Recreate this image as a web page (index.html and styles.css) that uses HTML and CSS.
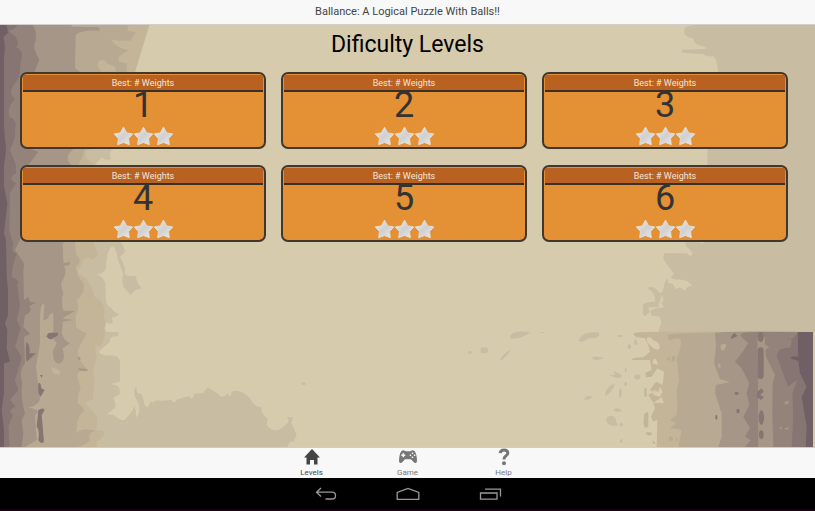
FILE: index.html
```html
<!DOCTYPE html>
<html lang="en">
<head>
<meta charset="utf-8">
<meta name="viewport" content="width=device-width, initial-scale=1">
<title>Ballance: A Logical Puzzle With Balls!!</title>
<link rel="stylesheet" href="styles.css">
</head>
<body>
<svg class="defs" aria-hidden="true">
  <defs>
    <linearGradient id="silver" x1="0" y1="0" x2="1" y2="1">
      <stop offset="0" stop-color="#ececec"/><stop offset=".5" stop-color="#d0d0d0"/><stop offset="1" stop-color="#ebebeb"/>
    </linearGradient>
    <symbol id="star" viewBox="0 0 21 21">
      <path d="M10.5 1.200 13.800 7.300 20.200 8.300 15.800 13.200 16.600 19.600 10.500 17.300 4.400 19.600 5.200 13.200 .800 8.300 7.200 7.300Z" fill="url(#silver)" stroke="#e2deda" stroke-width="1" stroke-linejoin="round"/>
    </symbol>
  </defs>
</svg>

<header class="titlebar">Ballance: A Logical Puzzle With Balls!!</header>

<main class="content">
  <svg class="backdrop" viewBox="0 75 2445 1266" preserveAspectRatio="none" aria-hidden="true">
    <!-- left rock face, lightest layer first -->
    <path fill="#c8bca2" d="M0 75H448L405 215 380 400 335 450Q325 465 334 477Q315 485 305 472L285 495 290 600 368 735 375 752Q372 765 360 768L376 808Q370 822 384 828L408 828Q408 848 425 865L405 871 392 886 370 860Q364 840 370 822L354 780Q348 735 335 740Q320 750 318 805Q312 822 288 824Q312 830 316 850L318 905Q326 925 330 920Q345 940 358 942Q345 955 335 953L339 969Q325 975 316 965Q308 982 320 995L355 997Q360 1010 345 1009Q326 1012 330 1025L296 1055Q305 1068 330 1066Q358 1066 360 1085V1145Q340 1148 330 1153Q360 1152 360 1175Q358 1188 340 1192Q350 1215 345 1223L320 1243Q345 1243 350 1252Q370 1270 382 1250Q402 1232 402 1215Q410 1238 408 1252Q420 1245 417 1215L403 1185Q402 1160 410 1162Q408 1185 422 1180Q432 1195 433 1215L445 1222Q450 1195 462 1210Q462 1198 480 1202L515 1200Q520 1215 532 1198L568 1188Q578 1205 582 1182L610 1178 623 1162 655 1182Q665 1200 683 1180Q690 1200 695 1175Q720 1165 750 1195Q765 1225 785 1220Q780 1240 803 1255L800 1275Q825 1310 862 1270Q870 1265 862 1252H880Q868 1270 880 1280L890 1305 880 1325Q870 1320 862 1341H0Z"/>
    <path fill="#c4b598" d="M0 75H448L405 215H330Q320 450 265 450Q240 465 285 495L275 715 293 760Q285 785 270 775Q252 765 242 800Q225 815 245 825L262 840 280 872Q275 890 300 900Q320 925 310 950Q325 970 312 985Q320 1010 300 1040Q278 1030 290 1070L280 1110 283 1150 278 1200Q240 1208 265 1218L290 1250Q295 1270 288 1290L315 1295Q305 1320 290 1325V1341H0Z"/>
    <path fill="#b8a993" d="M0 75H382L385 92 408 98 390 122 358 122 332 118Q350 145 385 150L355 172 357 185 380 190V215L300 400 253 450Q248 475 235 495L225 715 228 765Q250 780 228 800Q230 830 248 845Q260 875 230 900Q240 925 228 945V980Q235 990 260 1000L233 1050Q235 1085 260 1105Q232 1110 232 1130L242 1165Q230 1190 233 1210Q255 1225 250 1235Q228 1250 230 1300Q245 1280 285 1292 260 1300 270 1320Q250 1345 200 1341H0Z"/>
    <path fill="#a69687" d="M0 75H215L213 90 187 85 188 130 202 165Q205 183 175 175Q165 205 150 195Q135 185 170 170Q182 125 170 97Q190 75 215 80L296 82 300 92Q245 88 227 105L225 205 240 215 230 400 218 450Q190 470 213 495L200 720 188 730 190 790 210 785Q212 800 192 797Q203 820 185 845 182 860 190 880Q182 900 190 932L225 933 198 948 188 956 222 960 188 965Q188 990 185 1000L195 1020 210 1030 188 1045Q200 1085 175 1091Q155 1085 160 1050L170 1030 152 1005Q135 1015 130 1010Q145 1010 160 995V940Q145 940 145 955L130 962 133 915Q122 900 120 955V1030L108 1100 120 1200Q105 1225 80 1220 130 1230 105 1245L110 1320 75 1341H0Z"/>
    <path fill="#94837a" d="M0 75H98Q112 95 106 125Q95 140 118 180L105 210 90 400 98 450 115 455 85 495 60 720 45 750 72 790 70 820 72 900 85 890 90 905 108 908 88 918Q100 935 75 945L70 980 90 1002 72 1010 75 1090Q55 1115 67 1150 60 1190 75 1240L65 1260 70 1300 65 1341H0Z"/>
    <path fill="#867573" d="M0 75H52Q45 90 25 92L48 112Q62 145 42 138Q75 150 62 185L45 400 48 520Q20 535 48 550L30 580 28 690 40 735Q30 755 50 760L38 800 35 832Q62 840 52 855L60 920 50 960 62 985 45 1040Q70 1070 62 1085L45 1140 55 1170 30 1200 47 1220Q20 1230 38 1245L25 1280 28 1341H0Z"/>
    <path fill="#94837a" d="M62 225 35 265Q28 285 45 298Q20 320 28 350 55 360 50 400L30 450 48 495H62Z"/>
    <path fill="#706066" d="M0 75H20L24 98 10 112Q18 140 12 170V380L18 450 12 500V560L22 610 12 700 18 720 20 830 24 870V945L15 970 22 990 20 1045 30 1085 12 1090V1180L5 1230 12 1290V1341H0Z"/>
    <path fill="#c4b598" d="M296 205Q288 190 298 182 315 175 320 190L345 200 348 215H305Z"/>
    <path fill="#a69687" d="M233 1073Q238 1068 242 1075 242 1083 235 1079ZM235 1105 264 1107 260 1113 238 1112Z"/>
    <path fill="#867573" d="M143 1015Q137 1000 150 998L174 998Q177 1008 160 1013 157 1022 143 1015ZM79 1025Q92 1035 88 1060L108 1060 80 1085Q75 1065 79 1025ZM120 1125 128 1125 125 1133ZM115 1150Q122 1145 124 1165L134 1170 122 1190Q112 1185 115 1150ZM115 1230 128 1225 134 1230 125 1245 132 1325Q122 1335 115 1320Q120 1290 110 1280Z"/>
    <path fill="#c4b598" d="M153 1100 180 1113 178 1125 160 1120Z"/>

    <!-- right-hand haze -->
    <path fill="#c8bca2" d="M2445 75H2085Q2050 78 2053 92L2054 102Q2060 112 2080 115Q2078 135 2115 140L2120 147 2048 149Q2040 155 2050 158L2110 163Q2118 172 2140 168Q2152 180 2154 216L2122 450V495L2112 726Q2104 735 2100 727L2056 726Q2055 740 2072 750Q2082 765 2070 768L2060 760 1995 759Q1985 768 1995 785L2023 822 2012 830Q2022 842 2035 838L2060 842 2078 856 2063 860 2055 872 2040 862 2028 868 2018 852 2004 848 2003 836Q1992 842 1992 862L1985 880 1991 900 1984 908 1992 922 1965 926 1953 930V946L1978 950Q1988 965 1980 980L1975 996H2445Z"/>
    <path fill="#c8bca2" d="M1946 860Q1970 860 1978 880L1990 876 1978 905 1974 922 1944 922 1950 935 1935 949Q1925 945 1930 912Q1950 904 1965 906Q1968 878 1946 868Z"/>
    <g fill="#c8bca2">
      <path d="M1530 1012Q1530 990 1592 996 1560 1020 1530 1015ZM1620 996H1638L1628 1000ZM1737 1023Q1740 995 1795 997 1808 1015 1765 1015 1748 1030 1737 1023Z"/>
      <ellipse cx="1453" cy="1051" rx="12" ry="9"/><ellipse cx="1410" cy="1057" rx="5" ry="5"/>
      <path d="M1500 1078Q1515 1058 1530 1050 1530 1060 1505 1080ZM1777 1073Q1785 1065 1812 1074 1790 1085 1777 1076ZM1825 1124 1845 1125 1840 1112 1865 1125Q1865 1138 1845 1132ZM1815 1185Q1820 1155 1844 1152 1840 1175 1815 1188ZM1752 1197Q1760 1184 1778 1190 1770 1200 1755 1199ZM1840 1228Q1860 1220 1865 1234L1848 1235ZM1818 1260Q1825 1240 1845 1252L1853 1277Q1825 1282 1818 1260Z"/>
      <ellipse cx="1912" cy="1131" rx="9" ry="8"/><ellipse cx="1860" cy="1008" rx="7" ry="3"/><ellipse cx="1861" cy="1180" rx="4" ry="15"/><ellipse cx="1877" cy="1152" rx="4" ry="7"/><ellipse cx="1864" cy="1274" rx="5" ry="6"/><ellipse cx="1864" cy="1323" rx="4" ry="6"/><ellipse cx="1888" cy="1040" rx="5" ry="7"/><ellipse cx="1907" cy="1027" rx="5" ry="9"/><ellipse cx="1877" cy="1110" rx="3" ry="7"/><ellipse cx="911" cy="1151" rx="6" ry="4"/>
    </g>

    <!-- right rock block -->
    <path fill="#c4b598" d="M1905 998Q1925 992 2439 996V1341H1970L1972 1260 1960 1265 1953 1250 1965 1225 1960 1208 1992 1210 1985 1192 1960 1208 1945 1185 1962 1177 1950 1170 1968 1145 1988 1155 1992 1115 1972 1105 1955 1130 1938 1132 1936 1118 1955 1110 1950 1080 1895 1080Q1895 1072 1930 1072L1950 1055 1945 1035 1935 1015 1910 1012 1900 1003Z"/>
    <path fill="#d7cbad" d="M1940 1013Q1955 1008 1958 1020 1980 1025 1980 1045 1970 1055 1955 1040L1942 1028ZM1958 1082Q1965 1070 1970 1082L1975 1095 1958 1090ZM1960 1170 1975 1175 1980 1160 1988 1175 1980 1190 1960 1185Z"/>
    <path fill="#c4b598" d="M1933 1165 1940 1165 1940 1190 1933 1190ZM1933 1240 1945 1235 1945 1280 1935 1285 1930 1270ZM1937 1298Q1952 1292 1957 1303 1942 1312 1937 1298ZM1957 1320 1967 1330 1960 1332Z"/>
    <path fill="#b8a993" d="M2003 1005Q2010 996 2430 996V1341H2035L2045 1290Q2020 1285 2010 1285L2028 1270 2010 1260 2030 1245 2032 1220 2030 1170 2037 1140 2030 1075Q2045 1040 2042 1018 2030 1010 2008 1022Z"/>
    <path fill="#b8a993" d="M2015 1070Q2028 1060 2025 1082L2015 1085ZM2000 1076 2010 1070 2008 1085ZM2007 1310H2018V1322H2007ZM2027 1309 2034 1320 2028 1324Z"/>
    <path fill="#a69687" d="M2145 998Q2200 992 2430 996V1341H2155L2165 1310V1240L2145 1180 2148 1155 2190 1146 2160 1138 2142 1090 2148 1040Z"/>
    <path fill="#b8a993" d="M2162 1035Q2180 1025 2178 1040L2170 1053 2162 1048ZM2155 1090Q2162 1090 2162 1102L2155 1103Z"/>
    <path fill="#94837a" d="M2222 1008Q2215 996 2275 996H2430V1341H2320L2317 1240 2318 1150 2325 1125 2298 1070 2294 1010 2272 1010 2276 1341H2235L2252 1320 2235 1310 2250 1285 2230 1250 2248 1215 2240 1180 2248 1150 2225 1105 2205 1085 2225 1060 2245 1030Z"/>
    <path fill="#a69687" d="M2275 1045 2285 1025 2308 1042 2290 1052V1341H2275ZM2353 1205 2365 1202 2367 1210 2355 1214ZM2336 1282 2346 1280 2346 1290ZM2350 1286 2368 1280 2364 1290Z"/>
    <path fill="#867573" d="M2375 1020 2355 1010 2375 1018 2395 998H2439V1341H2375L2380 1250 2377 1180 2392 1140Q2375 1150 2365 1160L2345 1110 2330 1065 2340 1048 2372 1042Z"/>
    <g fill="#867573"><ellipse cx="2282" cy="1011" rx="9" ry="15"/><rect x="2273" y="1042" width="18" height="95" rx="9"/><path d="M2272 1175 2285 1165 2291 1175 2280 1184 2292 1192 2282 1200 2270 1190Z"/><ellipse cx="2284" cy="1253" rx="8" ry="22"/><ellipse cx="2284" cy="1304" rx="7" ry="13"/><path d="M2193 1010 2203 998 2213 1008 2193 1017Z"/><ellipse cx="2210" cy="1180" rx="6" ry="5"/><ellipse cx="2214" cy="1233" rx="5" ry="7"/><ellipse cx="2149" cy="1252" rx="3" ry="8"/></g>
    <path fill="#706066" d="M2393 996H2439V1341H2417L2420 1280 2405 1190 2420 1160 2400 1120 2395 1082 2372 1076Q2375 1066 2395 1070Z"/>
  </svg>

  <h1 class="heading">Dificulty Levels</h1>
  <div class="levels">
    <button class="level" type="button"><span class="best">Best: # Weights</span><span class="number">1</span><span class="stars"><svg><use href="#star"/></svg><svg><use href="#star"/></svg><svg><use href="#star"/></svg></span></button>
    <button class="level" type="button"><span class="best">Best: # Weights</span><span class="number">2</span><span class="stars"><svg><use href="#star"/></svg><svg><use href="#star"/></svg><svg><use href="#star"/></svg></span></button>
    <button class="level" type="button"><span class="best">Best: # Weights</span><span class="number">3</span><span class="stars"><svg><use href="#star"/></svg><svg><use href="#star"/></svg><svg><use href="#star"/></svg></span></button>
    <button class="level" type="button"><span class="best">Best: # Weights</span><span class="number">4</span><span class="stars"><svg><use href="#star"/></svg><svg><use href="#star"/></svg><svg><use href="#star"/></svg></span></button>
    <button class="level" type="button"><span class="best">Best: # Weights</span><span class="number">5</span><span class="stars"><svg><use href="#star"/></svg><svg><use href="#star"/></svg><svg><use href="#star"/></svg></span></button>
    <button class="level" type="button"><span class="best">Best: # Weights</span><span class="number">6</span><span class="stars"><svg><use href="#star"/></svg><svg><use href="#star"/></svg><svg><use href="#star"/></svg></span></button>
  </div>
</main>

<nav class="tabs">
  <a class="tab active" href="#levels">
    <svg viewBox="0 0 20 18"><path d="M10 1 18 9.500H15.500V16.500H12V12H8V16.500H4.500V9.500H2Z" fill="currentColor"/></svg>
    Levels
  </a>
  <a class="tab" href="#game">
    <svg viewBox="0 0 20 18"><path fill="currentColor" fill-rule="evenodd" d="M4.500 2.500Q6 2 7.500 3.200H12.500Q14 2 15.500 2.500 17.600 3 18.500 8 19.500 13.200 18.500 14.500 17.200 15.800 15.500 14L13 11.200H7L4.500 14Q2.800 15.800 1.500 14.500 .500 13.200 1.500 8 2.400 3 4.500 2.500ZM4.500 5.300V6.500H3.300V8.100H4.500V9.300H6.100V8.100H7.300V6.500H6.100V5.300ZM13.800 4.500V6H15.200V4.500ZM13.800 8.600V10H15.200V8.600ZM11.700 6.600V8H13.100V6.600ZM15.900 6.600V8H17.300V6.600Z"/></svg>
    Game
  </a>
  <a class="tab" href="#help">
    <svg viewBox="0 0 20 18"><path d="M6.200 5.200Q6.500 2 10 2 13.800 2 13.800 5 13.800 6.800 11.800 8.100 10 9.300 10 11.500" fill="none" stroke="currentColor" stroke-width="3"/><circle cx="10" cy="15.200" r="2" fill="currentColor"/></svg>
    Help
  </a>
</nav>

<div class="system">
  <button type="button" aria-label="Back"><svg viewBox="0 0 24 16"><path d="M7 2 2.500 6.200 7 10.500M3 6.200H18Q21.500 6.200 21.500 9.700 21.500 13 18 13H11.500"/></svg></button>
  <button type="button" aria-label="Home"><svg viewBox="0 0 24 16"><path d="M1.200 13.300V6.500L12 2.500 22.800 6.500V13.300Z"/></svg></button>
  <button type="button" aria-label="Recent apps"><svg viewBox="0 0 24 16"><path d="M2.500 7H19V13.200H2.500ZM7 3.200H22.500V10.500"/></svg></button>
</div>
</body>
</html>
```
FILE: styles.css
```css
* {
  box-sizing: border-box;
}

body {
  margin: 0;
  min-height: 100vh;
  display: flex;
  flex-direction: column;
  background: #000;
  font-family: Roboto, sans-serif;
}

.defs {
  display: block;
  width: 0;
  height: 0;
}

.titlebar {
  padding: 4px 0;
  border-bottom: 1px solid #cfcfcf;
  background: #f8f8f8;
  color: #444;
  font-size: 11px;
  line-height: 16px;
  text-align: center;
}

.content {
  position: relative;
  flex: 1;
  background: #d7cbad;
}

.backdrop {
  position: absolute;
  inset: 0;
  width: 100%;
  height: 100%;
}

.heading {
  position: relative;
  margin: 0;
  padding: 4px 0 11px;
  color: #000;
  font-size: 23px;
  font-weight: 400;
  line-height: 32px;
  text-align: center;
}

.levels {
  position: relative;
  display: grid;
  grid-template-columns: repeat(3, 1fr);
  gap: 16px 15px;
  padding: 0 27px 0 20px;
}

.level {
  display: flex;
  flex-direction: column;
  align-items: stretch;
  padding: 1px;
  border: 2px solid #40382f;
  border-radius: 7px;
  background: #e49135;
  color: #333;
  font-family: inherit;
  text-align: center;
}

.best {
  height: 17px;
  border-bottom: 2px solid #3a302a;
  background: #b96121;
  color: #f3e6da;
  font-size: 9px;
  line-height: 17px;
}

.number {
  font-size: 36px;
  line-height: 26px;
}

.stars {
  display: flex;
  justify-content: center;
  padding-top: 8px;
}

.stars svg {
  width: 21px;
  height: 20px;
}

.stars svg + svg {
  margin-left: -1px;
}

.tabs {
  display: flex;
  justify-content: center;
  border-top: 1px solid #d0cdc8;
  background: #f8f8f8;
}

.tab {
  display: flex;
  flex-direction: column;
  align-items: center;
  gap: 2px;
  width: 96px;
  color: #777;
  font-size: 8px;
  line-height: 10px;
  text-decoration: none;
}

.tab svg {
  width: 20px;
  height: 18px;
}

.active {
  color: #444;
}

.system {
  display: flex;
  justify-content: center;
  padding: 8px 0 7px;
  border-bottom: 2px solid #1a0010;
  background: #000;
}

.system button {
  display: flex;
  justify-content: center;
  width: 82px;
  padding: 0;
  border: 0;
  background: none;
}

.system svg {
  width: 24px;
  height: 16px;
  fill: none;
  stroke: #999;
  stroke-width: 1.3;
}
```
